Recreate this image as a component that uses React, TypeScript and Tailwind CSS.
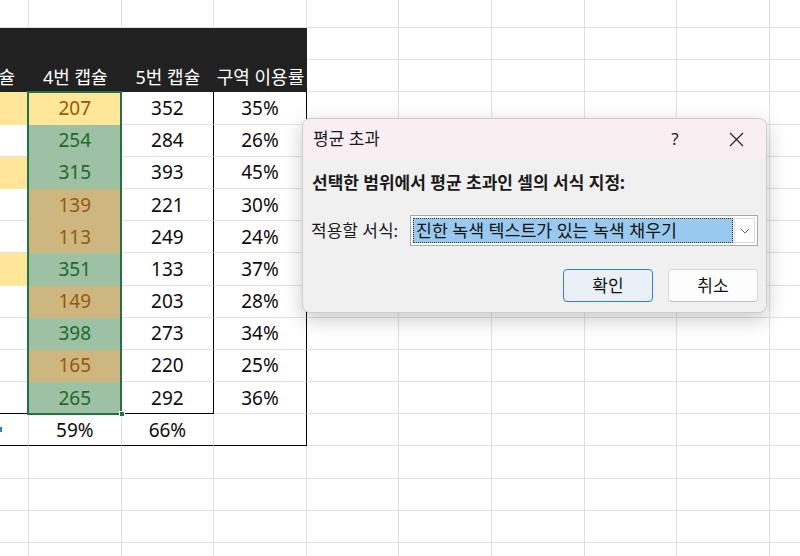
import React from "react";

type Row = { y: boolean; v: number; t: "a" | "g" | "t"; c2: number; c3: string };

const rows: Row[] = [
  { y: true, v: 207, t: "a", c2: 352, c3: "35%" },
  { y: false, v: 254, t: "g", c2: 284, c3: "26%" },
  { y: true, v: 315, t: "g", c2: 393, c3: "45%" },
  { y: false, v: 139, t: "t", c2: 221, c3: "30%" },
  { y: false, v: 113, t: "t", c2: 249, c3: "24%" },
  { y: true, v: 351, t: "g", c2: 133, c3: "37%" },
  { y: false, v: 149, t: "t", c2: 203, c3: "28%" },
  { y: false, v: 398, t: "g", c2: 273, c3: "34%" },
  { y: false, v: 165, t: "t", c2: 220, c3: "25%" },
  { y: false, v: 265, t: "g", c2: 292, c3: "36%" },
];

const FONT = { fontFamily: '"Noto Sans", "Noto Sans CJK KR", sans-serif' };

function Empty({ n }: { n: number }) {
  return (
    <>
      {Array.from({ length: n }).map((_, i) => (
        <div key={i} className="border-r border-b border-[#e1e1e1] bg-white" />
      ))}
    </>
  );
}

export default function App() {
  return (
    <div className="relative w-[800px] h-[556px] overflow-hidden bg-white" style={FONT}>
      <div className="relative ml-[-63.6px] mt-[-4.2px] grid grid-cols-[repeat(10,92.6px)] auto-rows-[32.2px] text-[19px] leading-none text-[#0d0d0d]">
        {/* row 0 */}
        <Empty n={10} />
        {/* header */}
        <div className="col-span-4 row-span-2 bg-[#212121] flex items-end">
          {["3번 캡슐", "4번 캡슐", "5번 캡슐", "구역 이용률"].map((h) => (
            <div key={h} className="w-[92.6px] h-[32.2px] pt-[1px] flex items-center justify-center text-white text-[18px] whitespace-nowrap">
              {h}
            </div>
          ))}
        </div>
        <Empty n={12} />
        {/* data rows */}
        {rows.map((r, i) => {
          const last = i === rows.length - 1;
          const c1 =
            r.t === "a"
              ? "bg-[#ffe699] text-[#9c5700]"
              : r.t === "g"
              ? "bg-[#9ec0a5] text-[#1d6a2c]"
              : "bg-[#cdb77f] text-[#96590e]";
          return (
            <React.Fragment key={i}>
              <div
                className={
                  (r.y ? "bg-[#ffe699] " : "bg-white ") +
                  "border-r border-b border-r-[#e1e1e1] " +
                  (last ? "border-b-[#000]" : r.y ? "border-b-[#ffe699]" : "border-b-[#e1e1e1]")
                }
              />
              <div
                className={
                  c1 +
                  " flex items-center justify-center pt-[1px] border-r border-b border-r-[#e1e1e1] " +
                  (last ? "border-b-[#000]" : "border-b-transparent")
                }
              >
                {r.v}
              </div>
              <div
                className={
                  "bg-white flex items-center justify-center pt-[1px] border-r border-b border-r-[#000] " +
                  (last ? "border-b-[#000]" : "border-b-[#e1e1e1]")
                }
              >
                {r.c2}
              </div>
              <div className="bg-white flex items-center justify-center pt-[1px] border-r border-b border-r-[#000] border-b-[#e1e1e1]">
                {r.c3}
              </div>
              <Empty n={6} />
            </React.Fragment>
          );
        })}
        {/* total row */}
        <div className="bg-white border-r border-b border-r-[#e1e1e1] border-b-[#000] flex items-center justify-end">
          <div className="w-[3px] h-[5px] bg-[#2f7fd0] mr-[90px] translate-x-[64px]" />
        </div>
        <div className="bg-white flex items-center justify-center pt-[1px] border-r border-b border-r-[#e1e1e1] border-b-[#000]">59%</div>
        <div className="bg-white flex items-center justify-center pt-[1px] border-r border-b border-r-[#e1e1e1] border-b-[#000]">66%</div>
        <div className="bg-white border-r border-b border-r-[#000] border-b-[#000]" />
        <Empty n={6} />
        <Empty n={50} />

        {/* selection */}
        <div className="absolute left-[90.8px] top-[95.2px] w-[95.2px] h-[323.6px] border-2 border-[#217346] pointer-events-none" />
        <div className="absolute left-[182.4px] top-[415.2px] w-[6px] h-[6px] bg-[#217346] border border-white pointer-events-none" />
      </div>

      {/* dialog */}
      <div className="absolute left-[302px] top-[118px] w-[465px] h-[195px] rounded-[8px] bg-[#f0f0f0] border border-[#cdcdcd] shadow-[0_6px_20px_rgba(0,0,0,0.22)] overflow-hidden flex flex-col text-[#1a1a1a]">
        <div className="h-[40px] bg-[#f9eff3] flex items-center pl-[10px] pr-[7px] shrink-0">
          <span className="text-[17px]">평균 초과</span>
          <div className="flex-1" />
          <div className="w-[46px] h-[32px] flex items-center justify-center text-[17px]">?</div>
          <div className="w-[46px] h-[32px] flex items-center justify-center ml-[15px]">
            <svg width="15" height="15" viewBox="0 0 15 15">
              <path d="M1 1 L14 14 M14 1 L1 14" stroke="#222" strokeWidth="1.2" fill="none" />
            </svg>
          </div>
        </div>
        <div className="pl-[9px] mt-[13px] h-[22px] flex items-center text-[17px] font-bold whitespace-nowrap">
          선택한 범위에서 평균 초과인 셀의 서식 지정:
        </div>
        <div className="flex items-center pl-[8px] mt-[21px] h-[31px]">
          <div className="w-[99px] text-[17px] whitespace-nowrap">적용할 서식:</div>
          <div className="w-[348px] h-[31px] border border-[#a8a8a8] bg-white flex items-stretch p-[2px] gap-[1px]">
            <div className="flex-1 bg-[#99c9ef] border border-dotted border-[#333] flex items-center pl-[2px] text-[17.3px] text-[#111] whitespace-nowrap">
              진한 녹색 텍스트가 있는 녹색 채우기
            </div>
            <div className="w-[21px] bg-white border border-[#dcdcdc] flex items-center justify-center">
              <svg width="10" height="6" viewBox="0 0 10 6">
                <path d="M1 1 L5 5 L9 1" stroke="#666" strokeWidth="1" fill="none" />
              </svg>
            </div>
          </div>
        </div>
        <div className="flex justify-end gap-[15px] pr-[8px] mt-[23px]">
          <button className="w-[90px] h-[33px] rounded-[4px] border border-[#2f7fd0] bg-[#eaf0f6] text-[17px] text-[#111]">
            확인
          </button>
          <button className="w-[90px] h-[33px] rounded-[4px] border border-[#d6d6d6] border-b-[#c2c2c2] bg-[#fdfdfd] text-[17px] text-[#111]">
            취소
          </button>
        </div>
      </div>
    </div>
  );
}
